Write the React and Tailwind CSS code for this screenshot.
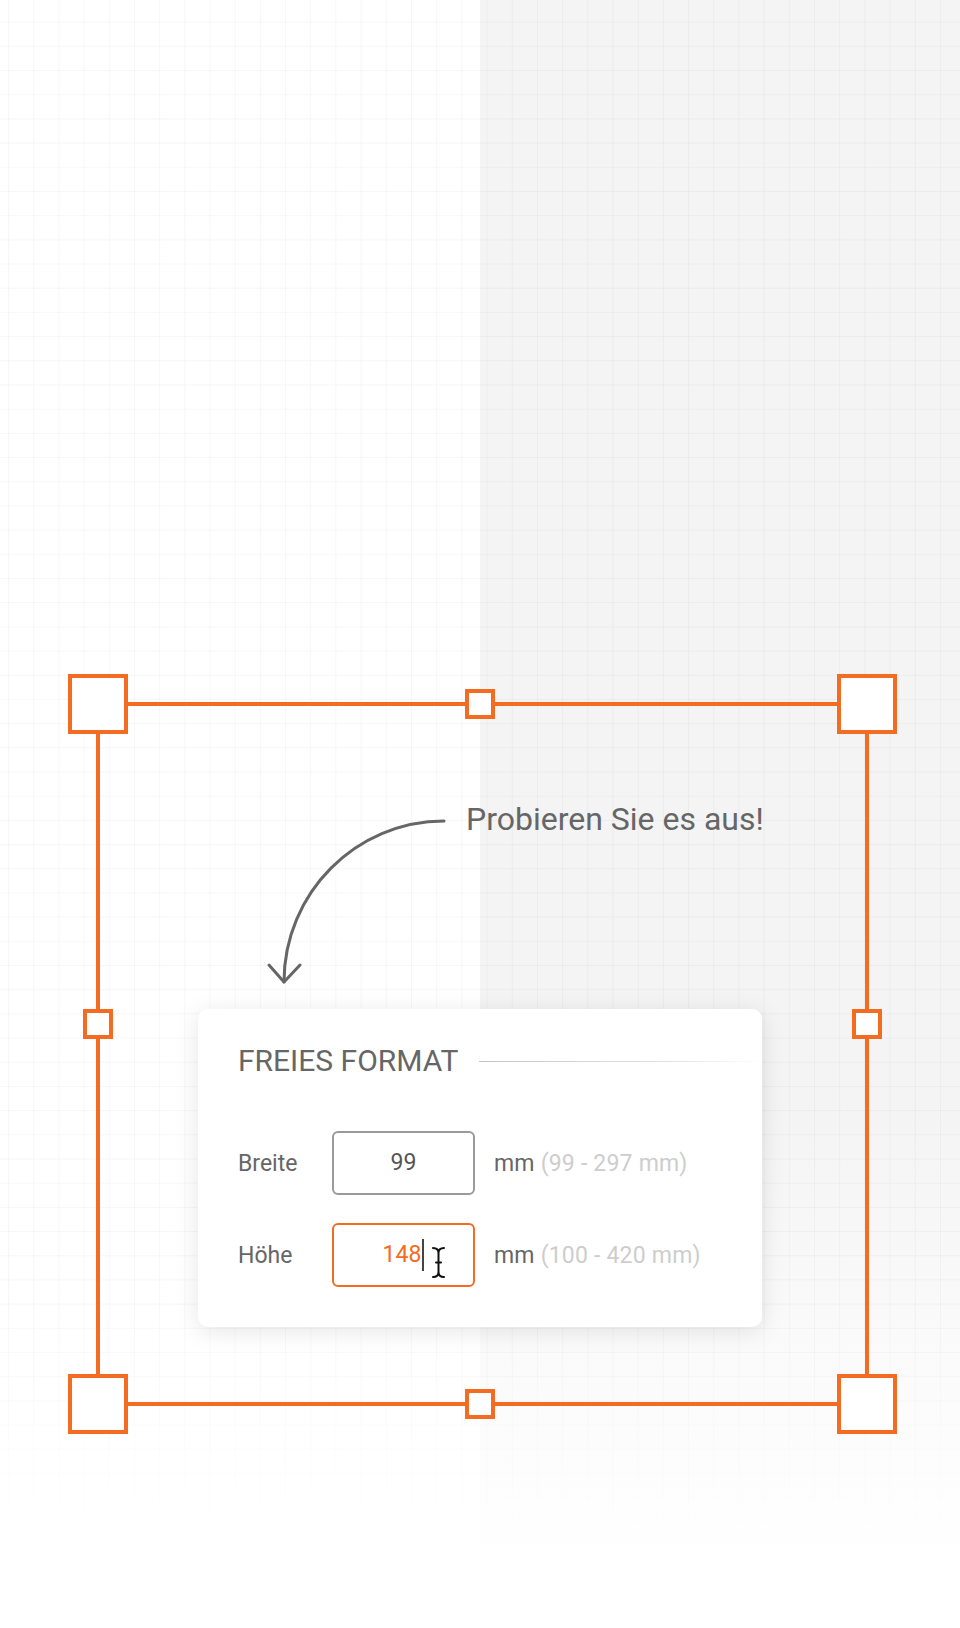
import React from 'react';

// Square grab handle of the selection frame
function Handle({ className }) {
  return <div className={`absolute bg-white border-4 border-[#f36c21] ${className}`} />;
}

function CurvedArrow() {
  return (
    <svg width="184" height="170" viewBox="0 0 184 170" fill="none" className="mt-[16px] shrink-0">
      <path d="M182 6 C 94 6, 22 78, 22 167" stroke="#666" strokeWidth="3" strokeLinecap="round" />
      <path d="M7 150 L22 167 L38 150" stroke="#666" strokeWidth="3" strokeLinecap="round" strokeLinejoin="round" />
    </svg>
  );
}

function IBeam() {
  const d =
    'M2 2 Q7.5 2 7.5 7 M13 2 Q7.5 2 7.5 7 M7.5 7 V26 M2 31 Q7.5 31 7.5 26 M13 31 Q7.5 31 7.5 26 M5 16.5 H10';
  return (
    <svg width="15" height="33" viewBox="0 0 15 33" fill="none" className="absolute left-[97px] top-[21px]">
      <path d={d} stroke="#fff" strokeWidth="4" strokeLinecap="round" />
      <path d={d} stroke="#111" strokeWidth="2" strokeLinecap="round" />
    </svg>
  );
}

function Row({ label, children, range, active }) {
  return (
    <div className="flex items-center">
      <span className="w-[94px] text-[23px] text-[#666] translate-y-[1px]">{label}</span>
      <div
        className={`relative w-[143px] h-[64px] rounded-[6px] border-2 flex items-center justify-center text-[23px] ${
          active ? 'border-[#f36c21] text-[#f36c21]' : 'border-[#9a9a9a] text-[#555]'
        }`}
      >
        {children}
      </div>
      <span className="ml-[19px] text-[23px] text-[#666] tracking-[0.2px] translate-y-[1px]">
        mm <span className="text-[#cdcdcd]">{range}</span>
      </span>
    </div>
  );
}

export default function App() {
  return (
    <div className="relative h-[1628px] w-[960px] overflow-hidden bg-white font-[Roboto,'Liberation_Sans',sans-serif]">
      {/* Background: white / grey halves with a faint grid */}
      <div className="absolute inset-0 flex">
        <div className="flex-1 bg-white" />
        <div className="flex-1 bg-[linear-gradient(to_bottom,#f4f4f4_0%,#f4f4f4_68%,#fafafa_82%,#ffffff_96%)]" />
      </div>
      <div className="absolute inset-0 bg-[linear-gradient(to_right,rgba(0,0,0,0.032)_1px,transparent_1px),linear-gradient(to_bottom,rgba(0,0,0,0.032)_1px,transparent_1px)] bg-[length:25.2px_24.2px] bg-[position:8px_21.7px] [mask-image:linear-gradient(to_bottom,black_0%,black_80%,transparent_95%)]" />

      {/* Selection frame */}
      <div className="absolute left-[96px] top-[702px] w-[773px] h-[704px] border-4 border-[#f36c21]" />
      <Handle className="left-[68px] top-[674px] w-[60px] h-[60px]" />
      <Handle className="left-[837px] top-[674px] w-[60px] h-[60px]" />
      <Handle className="left-[68px] top-[1374px] w-[60px] h-[60px]" />
      <Handle className="left-[837px] top-[1374px] w-[60px] h-[60px]" />
      <Handle className="left-[465px] top-[689px] w-[30px] h-[30px]" />
      <Handle className="left-[465px] top-[1389px] w-[30px] h-[30px]" />
      <Handle className="left-[83px] top-[1009px] w-[30px] h-[30px]" />
      <Handle className="left-[852px] top-[1009px] w-[30px] h-[30px]" />

      {/* Content */}
      <div className="relative flex flex-col pt-[799px]">
        <div className="flex items-start pl-[262px]">
          <CurvedArrow />
          <span className="ml-[20px] text-[32px] leading-[40px] text-[#666] whitespace-nowrap">
            Probieren Sie es aus!
          </span>
        </div>

        <div className="ml-[198px] mt-[24px] w-[564px] h-[318px] rounded-[10px] bg-white shadow-[0_4px_24px_rgba(0,0,0,0.10)] pl-[40px] pt-[34px]">
          <div className="flex items-center h-[36px]">
            <h2 className="text-[30px] leading-[36px] text-[#666] whitespace-nowrap">FREIES FORMAT</h2>
            <div className="ml-[21px] flex-1 h-px bg-[linear-gradient(to_right,#c4c4c4,#e4e4e4_70%,rgba(255,255,255,0))]" />
          </div>

          <div className="mt-[52px] flex flex-col gap-[28px]">
            <Row label="Breite" range="(99 - 297 mm)">
              99
            </Row>
            <Row label="Höhe" range="(100 - 420 mm)" active>
              <span>148</span>
              <span className="ml-[1px] w-[2px] h-[32px] bg-[#444]" />
              <IBeam />
            </Row>
          </div>
        </div>
      </div>
    </div>
  );
}
